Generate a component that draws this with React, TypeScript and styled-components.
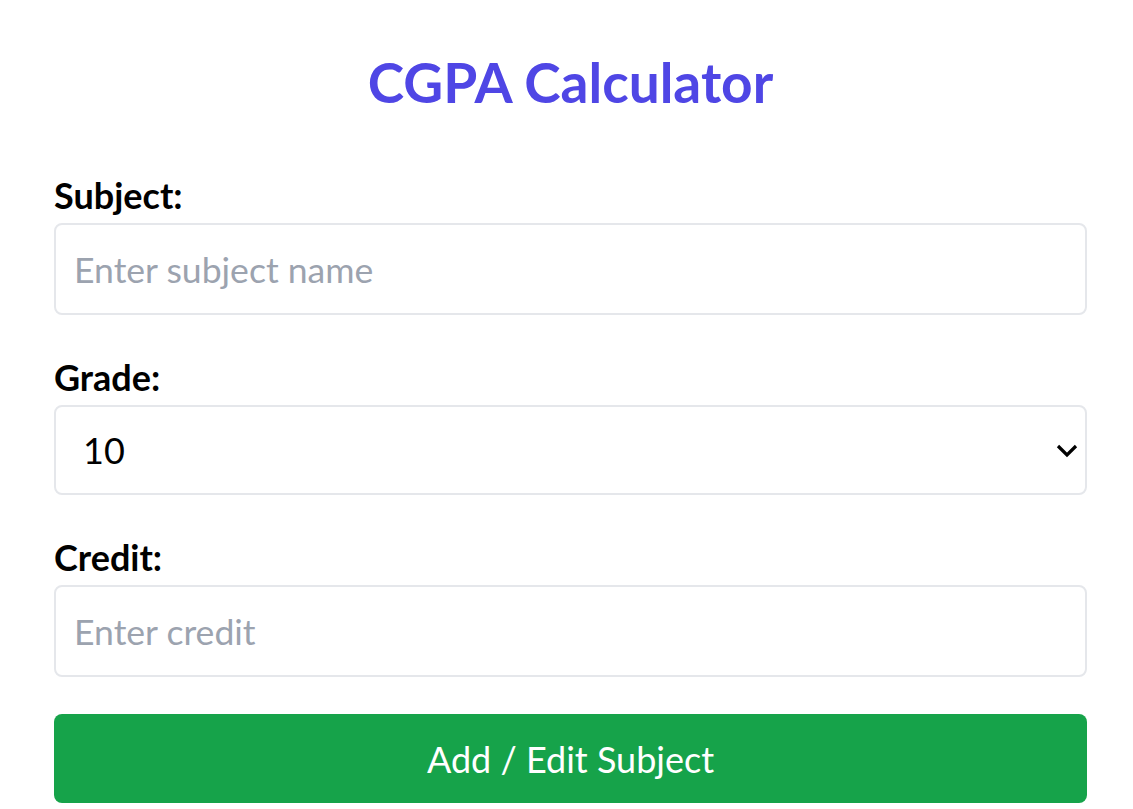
import React from "react";
import styled, { createGlobalStyle } from "styled-components";

const GlobalStyle = createGlobalStyle`
  html, body {
    margin: 0;
    padding: 0;
    background: #ffffff;
  }
  body {
    font-family: Lato, "Noto Sans", sans-serif;
  }
  * { box-sizing: border-box; }
`;

const Page = styled.div`
  width: 1133px;
  padding: 47px 46px 0 54px;
`;

const Form = styled.form`
  display: flex;
  flex-direction: column;
  width: 1033px;
`;

const Title = styled.h1`
  margin: 0 0 57px;
  font-size: 55px;
  line-height: 70px;
  font-weight: 700;
  color: #4f46e5;
  text-align: center;
`;

const Field = styled.div<{ $last?: boolean }>`
  display: flex;
  flex-direction: column;
  margin-bottom: ${(p) => (p.$last ? "37px" : "41px")};
`;

const Label = styled.label`
  font-size: 36px;
  line-height: 42px;
  font-weight: 700;
  color: #000000;
  margin-bottom: 7px;
`;

const TextInput = styled.input<{ $h: number }>`
  height: ${(p) => p.$h}px;
  width: 100%;
  border: 2px solid #e5e7eb;
  border-radius: 8px;
  padding: 0 18px;
  font-family: Lato, "Noto Sans", sans-serif;
  font-size: 35.6px;
  color: #000;
  outline: none;
  &::placeholder {
    color: #9ca3af;
  }
`;

const SelectWrap = styled.div`
  position: relative;
  width: 100%;
`;

const Select = styled.select`
  appearance: none;
  -webkit-appearance: none;
  width: 100%;
  height: 90px;
  border: 2px solid #e5e7eb;
  border-radius: 8px;
  padding: 0 60px 0 27px;
  font-family: Lato, "Noto Sans", sans-serif;
  font-size: 36px;
  color: #000;
  background: #fff;
  outline: none;
`;

const Chevron = styled.svg`
  position: absolute;
  right: 9px;
  top: 39px;
  width: 22px;
  height: 14px;
  pointer-events: none;
`;

const Button = styled.button`
  height: 89px;
  width: 100%;
  border: none;
  border-radius: 8px;
  background: #16a34a;
  color: #ffffff;
  font-family: Lato, "Noto Sans", sans-serif;
  font-size: 36px;
  cursor: pointer;
`;

export default function App() {
  return (
    <>
      <GlobalStyle />
      <Page>
        <Form onSubmit={(e) => e.preventDefault()}>
          <Title>CGPA Calculator</Title>
          <Field>
            <Label>Subject:</Label>
            <TextInput $h={92} placeholder="Enter subject name" />
          </Field>
          <Field>
            <Label>Grade:</Label>
            <SelectWrap>
              <Select defaultValue="10">
                <option value="10">10</option>
                <option value="9">9</option>
                <option value="8">8</option>
                <option value="7">7</option>
                <option value="6">6</option>
                <option value="5">5</option>
                <option value="0">0</option>
              </Select>
              <Chevron viewBox="0 0 22 14">
                <path d="M2 2 L11 11 L20 2" fill="none" stroke="#000" strokeWidth="3.2" />
              </Chevron>
            </SelectWrap>
          </Field>
          <Field $last>
            <Label>Credit:</Label>
            <TextInput $h={92} placeholder="Enter credit" />
          </Field>
          <Button type="submit">Add / Edit Subject</Button>
        </Form>
      </Page>
    </>
  );
}
